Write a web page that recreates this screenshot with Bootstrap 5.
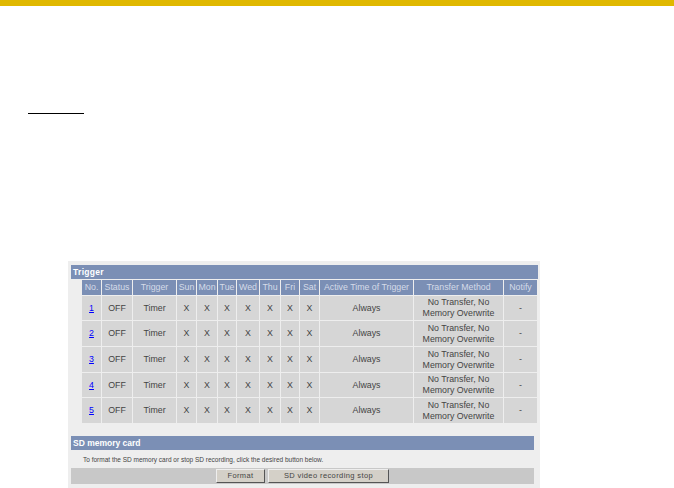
<!DOCTYPE html>
<html lang="en">
<head>
<meta charset="utf-8">
<title>Trigger</title>
<link href="https://cdn.jsdelivr.net/npm/bootstrap@5.3.0/dist/css/bootstrap.min.css" rel="stylesheet">
<style>
html,body{height:488px;overflow:hidden;background:#fff}
body{font-family:"Liberation Sans",Arial,sans-serif;font-size:9px;line-height:11px;color:#444}
.topband{height:6px;background:#e0b800}
.ruleline{width:56px;height:1px;background:#000;margin:107px 0 0 28px}
.shot{width:472px;height:227px;margin:147px 0 0 68px;background:#eee;padding:4px 2px 0 3px}
.bluehead{height:14px;background:#7b8fb5;color:#fff;font-weight:700;font-size:8.5px;line-height:14px;padding-left:2px;letter-spacing:.3px}
.sdhead{width:463px;margin-top:12px;letter-spacing:0}
.trigtable{width:457px;margin:0 0 0 10px;border-collapse:separate;border-spacing:1px;table-layout:fixed;text-align:center}
.trigtable th{height:15px;padding:0;background:#7b8fb5;color:#d5dbe8;font-weight:400;font-size:8.8px;white-space:nowrap}
.trigtable td{height:25px;padding:0;background:#d6d6d6;font-size:8.8px;line-height:11px}
.trigtable .rowshort td{height:24px}
.trigtable a{color:#00f}
.cno{width:19px}.cst{width:30px}.ctr{width:43px}.csu{width:19px}.cmo{width:20px}.ctu{width:18px}.cwe{width:22px}.cth{width:20px}.cfr{width:18px}.csa{width:19px}.cac{width:93px}.cme{width:89px}.cnt{width:33px}
.note{font-size:6.5px;line-height:20px;height:18px;padding-left:12px;color:#444}
.btnbar{width:463px;height:16px;background:#c8c8c8;gap:3px}
.btnbar .btn{height:14px;padding:0;font-size:7.5px;line-height:12px;letter-spacing:.4px;background:#d4d0c8;color:#444;border:1px solid;border-color:#eee #555 #555 #eee;border-radius:0}
.btnfmt{width:49px}.btnsd{width:121px}
</style>
</head>
<body>
<div class="topband"></div>
<div class="ruleline"></div>
<div class="shot">
  <div class="bluehead">Trigger</div>
  <table class="trigtable">
    <colgroup><col class="cno"><col class="cst"><col class="ctr"><col class="csu"><col class="cmo"><col class="ctu"><col class="cwe"><col class="cth"><col class="cfr"><col class="csa"><col class="cac"><col class="cme"><col class="cnt"></colgroup>
    <thead><tr><th>No.</th><th>Status</th><th>Trigger</th><th>Sun</th><th>Mon</th><th>Tue</th><th>Wed</th><th>Thu</th><th>Fri</th><th>Sat</th><th>Active Time of Trigger</th><th>Transfer Method</th><th>Notify</th></tr></thead>
    <tbody>
      <tr class="rowshort"><td><a href="#">1</a></td><td>OFF</td><td>Timer</td><td>X</td><td>X</td><td>X</td><td>X</td><td>X</td><td>X</td><td>X</td><td>Always</td><td>No Transfer, No<br>Memory Overwrite</td><td>-</td></tr>
      <tr><td><a href="#">2</a></td><td>OFF</td><td>Timer</td><td>X</td><td>X</td><td>X</td><td>X</td><td>X</td><td>X</td><td>X</td><td>Always</td><td>No Transfer, No<br>Memory Overwrite</td><td>-</td></tr>
      <tr><td><a href="#">3</a></td><td>OFF</td><td>Timer</td><td>X</td><td>X</td><td>X</td><td>X</td><td>X</td><td>X</td><td>X</td><td>Always</td><td>No Transfer, No<br>Memory Overwrite</td><td>-</td></tr>
      <tr class="rowshort"><td><a href="#">4</a></td><td>OFF</td><td>Timer</td><td>X</td><td>X</td><td>X</td><td>X</td><td>X</td><td>X</td><td>X</td><td>Always</td><td>No Transfer, No<br>Memory Overwrite</td><td>-</td></tr>
      <tr><td><a href="#">5</a></td><td>OFF</td><td>Timer</td><td>X</td><td>X</td><td>X</td><td>X</td><td>X</td><td>X</td><td>X</td><td>Always</td><td>No Transfer, No<br>Memory Overwrite</td><td>-</td></tr>
    </tbody>
  </table>
  <div class="bluehead sdhead">SD memory card</div>
  <div class="note">To format the SD memory card or stop SD recording, click the desired button below.</div>
  <div class="btnbar d-flex justify-content-center align-items-center">
    <button type="button" class="btn btnfmt">Format</button>
    <button type="button" class="btn btnsd">SD video recording stop</button>
  </div>
</div>
</body>
</html>
